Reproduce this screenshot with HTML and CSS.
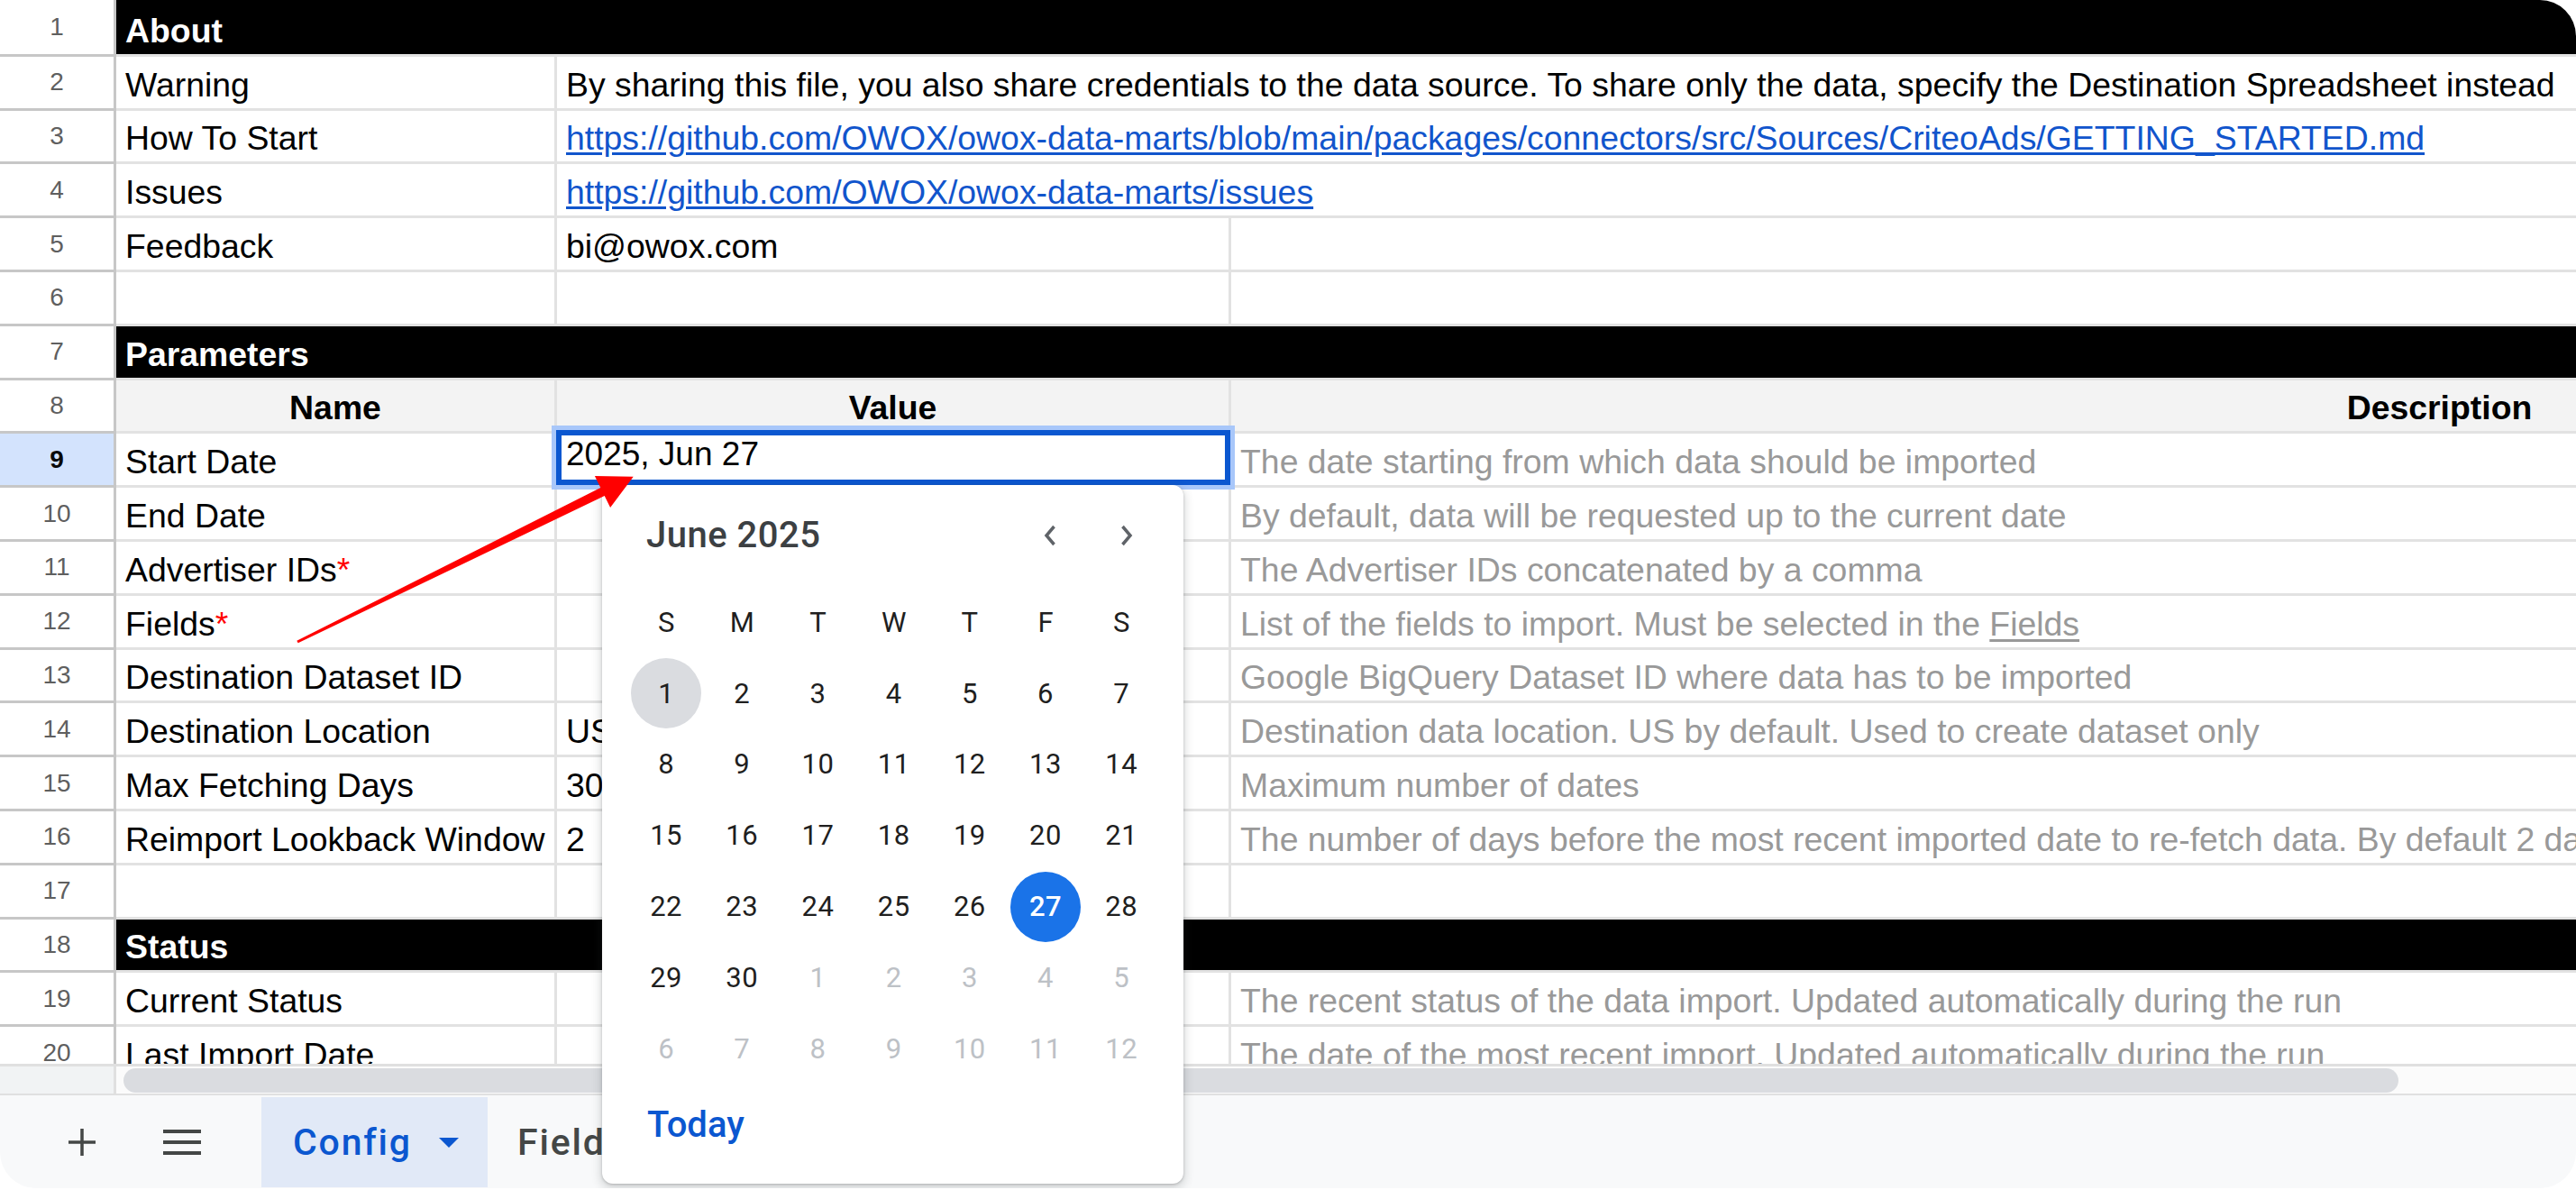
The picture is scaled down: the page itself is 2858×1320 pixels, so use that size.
FILE: index.html
```html
<!DOCTYPE html>
<html>
<head>
<meta charset="utf-8">
<link rel="stylesheet" href="styles.css">
</head>
<body>
<div class="frame">
  <div class="sheet">
    <div class="rn first">1</div><div class="c sec first">About</div>

    <div class="rn">2</div><div class="c">Warning</div><div class="c span2">By sharing this file, you also share credentials to the data source. To share only the data, specify the Destination Spreadsheet instead</div>

    <div class="rn">3</div><div class="c">How To Start</div><div class="c span2"><span class="link">https://github.com/OWOX/owox-data-marts/blob/main/packages/connectors/src/Sources/CriteoAds/GETTING_STARTED.md</span></div>

    <div class="rn">4</div><div class="c">Issues</div><div class="c span2"><span class="link">https://github.com/OWOX/owox-data-marts/issues</span></div>

    <div class="rn">5</div><div class="c">Feedback</div><div class="c">bi@owox.com</div><div class="c"></div>

    <div class="rn">6</div><div class="c"></div><div class="c"></div><div class="c"></div>

    <div class="rn">7</div><div class="c sec">Parameters</div>

    <div class="rn">8</div><div class="c hdr">Name</div><div class="c hdr">Value</div><div class="c hdr">Description</div>

    <div class="rn on">9</div><div class="c">Start Date</div><div class="c"></div><div class="c desc">The date starting from which data should be imported</div>

    <div class="rn">10</div><div class="c">End Date</div><div class="c"></div><div class="c desc">By default, data will be requested up to the current date</div>

    <div class="rn">11</div><div class="c">Advertiser IDs<span class="req">*</span></div><div class="c"></div><div class="c desc">The Advertiser IDs concatenated by a comma</div>

    <div class="rn">12</div><div class="c">Fields<span class="req">*</span></div><div class="c"></div><div class="c desc">List of the fields to import. Must be selected in the&nbsp;<span class="uline">Fields</span></div>

    <div class="rn">13</div><div class="c">Destination Dataset ID</div><div class="c"></div><div class="c desc">Google BigQuery Dataset ID where data has to be imported</div>

    <div class="rn">14</div><div class="c">Destination Location</div><div class="c">US</div><div class="c desc">Destination data location. US by default. Used to create dataset only</div>

    <div class="rn">15</div><div class="c">Max Fetching Days</div><div class="c">30</div><div class="c desc">Maximum number of dates</div>

    <div class="rn">16</div><div class="c">Reimport Lookback Window</div><div class="c">2</div><div class="c desc">The number of days before the most recent imported date to re-fetch data. By default 2 days.</div>

    <div class="rn">17</div><div class="c"></div><div class="c"></div><div class="c"></div>

    <div class="rn">18</div><div class="c sec">Status</div>

    <div class="rn">19</div><div class="c">Current Status</div><div class="c"></div><div class="c desc">The recent status of the data import. Updated automatically during the run</div>

    <div class="rn">20</div><div class="c">Last Import Date</div><div class="c"></div><div class="c desc">The date of the most recent import. Updated automatically during the run</div>
  </div>

  <div class="hscroll">
    <div class="hs-corner"></div>
    <div class="hs-track"><div class="thumb"></div></div>
  </div>

  <div class="tabbar">
    <div class="tb-icon tb-plus">
      <svg width="32" height="32" viewBox="0 0 32 32"><path d="M16 1v30M1 16h30" stroke="#444746" stroke-width="3.5" fill="none"/></svg>
    </div>
    <div class="tb-icon tb-menu">
      <svg width="42" height="28" viewBox="0 0 42 28"><path d="M0 2h42M0 14h42M0 26h42" stroke="#444746" stroke-width="4" fill="none"/></svg>
    </div>
    <div class="tab active">
      <span class="tab-name">Config</span>
      <svg class="tab-caret" width="22" height="11" viewBox="0 0 22 11"><path d="M0 0h22L11 11z" fill="#0b57d0"/></svg>
    </div>
    <div class="tab">
      <span class="tab-name">Fields</span>
    </div>
  </div>

  <div class="editor"><div class="ed-in">2025, Jun 27</div></div>

  <div class="picker">
    <div class="pk-head">
      <div class="pk-title">June 2025</div>
      <div class="pk-nav"><svg width="14" height="24" viewBox="0 0 14 24"><path d="M11.5 2 3 12l8.5 10" fill="none" stroke="#5f6368" stroke-width="3.5"/></svg></div>
      <div class="pk-nav"><svg width="14" height="24" viewBox="0 0 14 24"><path d="M2.5 2 11 12l-8.5 10" fill="none" stroke="#5f6368" stroke-width="3.5"/></svg></div>
    </div>
    <div class="pk-grid">
      <div class="wd">S</div><div class="wd">M</div><div class="wd">T</div><div class="wd">W</div><div class="wd">T</div><div class="wd">F</div><div class="wd">S</div>

      <div class="d"><span class="today-mark">1</span></div><div class="d"><span>2</span></div><div class="d"><span>3</span></div><div class="d"><span>4</span></div><div class="d"><span>5</span></div><div class="d"><span>6</span></div><div class="d"><span>7</span></div>

      <div class="d"><span>8</span></div><div class="d"><span>9</span></div><div class="d"><span>10</span></div><div class="d"><span>11</span></div><div class="d"><span>12</span></div><div class="d"><span>13</span></div><div class="d"><span>14</span></div>

      <div class="d"><span>15</span></div><div class="d"><span>16</span></div><div class="d"><span>17</span></div><div class="d"><span>18</span></div><div class="d"><span>19</span></div><div class="d"><span>20</span></div><div class="d"><span>21</span></div>

      <div class="d"><span>22</span></div><div class="d"><span>23</span></div><div class="d"><span>24</span></div><div class="d"><span>25</span></div><div class="d"><span>26</span></div><div class="d"><span class="picked">27</span></div><div class="d"><span>28</span></div>

      <div class="d"><span>29</span></div><div class="d"><span>30</span></div><div class="d mute"><span>1</span></div><div class="d mute"><span>2</span></div><div class="d mute"><span>3</span></div><div class="d mute"><span>4</span></div><div class="d mute"><span>5</span></div>

      <div class="d mute"><span>6</span></div><div class="d mute"><span>7</span></div><div class="d mute"><span>8</span></div><div class="d mute"><span>9</span></div><div class="d mute"><span>10</span></div><div class="d mute"><span>11</span></div><div class="d mute"><span>12</span></div>
    </div>
    <div class="pk-today">Today</div>
  </div>

  <svg class="arrow" width="2858" height="1320" viewBox="0 0 2858 1320">
    <polygon points="329.3,710.7 666.3,541.0 659.9,528.0 702.7,528.8 677.1,563.0 670.7,550.0 330.7,713.3" fill="#ff0000"/>
  </svg>
</div>
</body>
</html>
```

FILE: styles.css
```css
html, body {
  margin: 0;
  padding: 0;
  background: #ffffff;
}

.frame {
  position: relative;
  width: 2858px;
  height: 1318px;
  border-radius: 40px;
  overflow: hidden;
  background: #ffffff;
}

/* ---------- sheet grid ---------- */
.sheet {
  display: grid;
  grid-template-columns: 129px 489px 748px 2684px;
  grid-template-rows: repeat(20, 59.8px);
  height: 1180px;
  overflow: hidden;
  font-family: "Liberation Sans", Arial, sans-serif;
  font-size: 37.4px;
  line-height: 42px;
  color: #000;
}

.rn {
  display: flex;
  align-items: center;
  justify-content: center;
  box-sizing: border-box;
  border-top: 3px solid #c7c7c7;
  border-right: 3px solid #c7c7c7;
  font-size: 28px;
  color: #5f5f5f;
  background: #fff;
}

.rn.on {
  background: #d3e3fd;
  color: #0a0a0a;
  font-weight: 700;
}

.c {
  display: flex;
  align-items: flex-end;
  box-sizing: border-box;
  padding: 0 10px 5px 10px;
  border-top: 3px solid #e2e2e2;
  border-right: 3px solid #e2e2e2;
  white-space: nowrap;
  overflow: hidden;
  min-width: 0;
}

.first {
  border-top: none;
}

.span2 {
  grid-column: span 2;
}

.sec {
  grid-column: 2 / span 3;
  background: #000;
  color: #fff;
  font-weight: 700;
  border-right-color: #000;
}

.hdr {
  background: #f3f3f3;
  font-weight: 700;
  justify-content: center;
}

.desc {
  color: #999999;
}

.req {
  color: #ff0000;
}

.link {
  color: #1155cc;
  text-decoration: underline;
  text-underline-offset: 3px;
}

.uline {
  text-decoration: underline;
  text-underline-offset: 4px;
}

/* ---------- horizontal scrollbar ---------- */
.hscroll {
  display: flex;
  height: 35px;
  box-sizing: border-box;
  border-top: 3px solid #e0e0e0;
  border-bottom: 2px solid #e0e0e0;
}

.hs-corner {
  width: 129px;
  box-sizing: border-box;
  background: #f1f3f4;
  border-right: 3px solid #e0e0e0;
}

.hs-track {
  flex: 1;
  padding: 2px 0 0 8px;
  background: #fbfbfb;
}

.thumb {
  width: 2524px;
  height: 27px;
  border-radius: 14px;
  background: #dadce0;
}

/* ---------- tab bar ---------- */
.tabbar {
  display: flex;
  align-items: center;
  height: 103px;
  background: #f8f9fa;
  font-family: Roboto, "Noto Sans", sans-serif;
}

.tb-icon {
  display: flex;
  align-items: center;
  justify-content: center;
}

.tb-plus {
  margin-left: 75px;
}

.tb-menu {
  margin-left: 74px;
}

.tab {
  display: flex;
  align-items: center;
  align-self: stretch;
  margin: 2px 0 1px 33px;
  font-size: 41px;
  font-weight: 500;
  letter-spacing: 1.8px;
  color: #444746;
}

.tab.active {
  width: 251px;
  box-sizing: border-box;
  margin-left: 67px;
  padding-left: 35px;
  background: #e1e9f7;
  color: #0b57d0;
}

.tab-caret {
  margin-left: 30px;
}

/* ---------- cell editor ---------- */
.editor {
  position: absolute;
  left: 612px;
  top: 472px;
  width: 758px;
  height: 71px;
  box-sizing: border-box;
  border: 5px solid #a8c7fa;
}

.ed-in {
  height: 100%;
  box-sizing: border-box;
  border: 6px solid #0b57d0;
  background: #fff;
  padding-left: 5px;
  font-family: "Liberation Sans", Arial, sans-serif;
  font-size: 37px;
  line-height: 41px;
  color: #000;
}

/* ---------- date picker ---------- */
.picker {
  position: absolute;
  left: 668px;
  top: 538px;
  width: 645px;
  height: 775px;
  background: #fff;
  border-radius: 12px;
  box-shadow: 0 1px 3px rgba(60, 64, 67, 0.3), 0 4px 10px 3px rgba(60, 64, 67, 0.15);
  font-family: Roboto, "Noto Sans", sans-serif;
  color: #1f1f1f;
}

.pk-head {
  display: flex;
  align-items: center;
  height: 47px;
  margin-top: 32px;
  padding: 0 21px 0 49px;
}

.pk-title {
  flex: 1;
  font-size: 40px;
  line-height: 47px;
  font-weight: 500;
  color: #3c4043;
  letter-spacing: 0.5px;
}

.pk-nav {
  width: 85px;
  display: flex;
  justify-content: center;
  align-items: center;
}

.pk-grid {
  display: grid;
  grid-template-columns: repeat(7, 84.2px);
  grid-auto-rows: 78.8px;
  margin: 34px 0 0 29px;
}

.wd, .d {
  display: flex;
  align-items: center;
  justify-content: center;
  font-size: 31px;
}

.wd {
  font-weight: 400;
  color: #1f1f1f;
}

.d span {
  display: flex;
  align-items: center;
  justify-content: center;
  width: 78px;
  height: 78px;
  border-radius: 50%;
  letter-spacing: 0.5px;
}

.d.mute {
  color: #bdc1c6;
}

.today-mark {
  background: #dadce0;
}

.picked {
  background: #1a73e8;
  color: #fff;
  font-weight: 500;
}

.pk-today {
  margin: 21px 0 0 50px;
  font-size: 40px;
  line-height: 47px;
  font-weight: 500;
  color: #0b57d0;
}

/* ---------- annotation arrow ---------- */
.arrow {
  position: absolute;
  left: 0;
  top: 0;
  pointer-events: none;
}
```
